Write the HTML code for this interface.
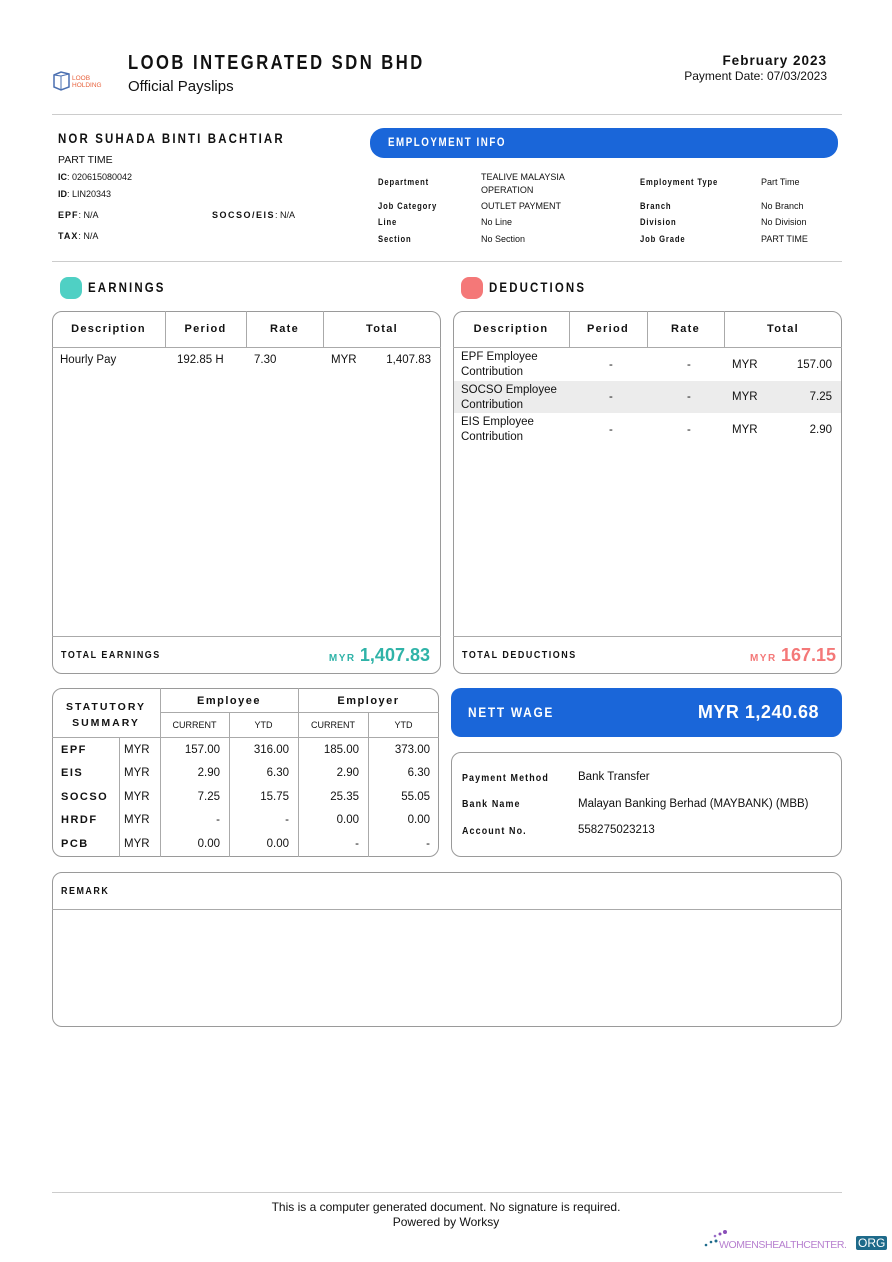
<!DOCTYPE html>
<html><head><meta charset="utf-8">
<style>
*{margin:0;padding:0;box-sizing:border-box}
body{width:892px;height:1262px;background:#fff;font-family:"Liberation Sans",Arial,sans-serif;color:#111;position:relative;overflow:hidden}
.a{position:absolute;white-space:nowrap}
.b{font-weight:bold;letter-spacing:1.2px;transform-origin:left center}
.c{display:inline-block;transform:scaleX(.85);transform-origin:left center}
.box{position:absolute;border:1px solid #9a9a9a;border-radius:10px}
.hl{position:absolute;height:1px;background:#aaa}
.vl{position:absolute;width:1px;background:#aaa}
.s9{font-size:9px}
.s11{font-size:11.5px}
.r{text-align:right}
.ctr{text-align:center}
</style></head><body>

<svg class="a" style="left:53px;top:71px" width="52" height="20" viewBox="0 0 52 20">
<path d="M1 4 L8 1 L16 3 L16 16 L8 19 L1 16 Z" fill="none" stroke="#4a6fb0" stroke-width="1.5"/>
<path d="M8 5 L16 3 M8 5 L1 4 M8 5 L8 19" fill="none" stroke="#4a6fb0" stroke-width="1"/>
<text x="19" y="9" font-size="6.5" fill="#e8623c" font-family="Liberation Sans">LOOB</text>
<text x="19" y="16" font-size="6.5" fill="#e8623c" font-family="Liberation Sans">HOLDING</text>
</svg>
<div class="a b" style="left:128px;top:52px;font-size:20px;letter-spacing:3px"><span class="c" style="transform:scaleX(.83)">LOOB INTEGRATED SDN BHD</span></div>
<div class="a" style="left:128px;top:78px;font-size:15px">Official Payslips</div>
<div class="a b r" style="right:65px;top:53px;font-size:13.5px;letter-spacing:1px">February 2023</div>
<div class="a r" style="right:65px;top:69px;font-size:12px">Payment Date: 07/03/2023</div>
<div class="hl" style="left:52px;top:114px;width:790px;background:#ccc"></div>

<div class="a b" style="left:58px;top:131px;font-size:13.5px;letter-spacing:2.5px"><span class="c">NOR SUHADA BINTI BACHTIAR</span></div>
<div class="a" style="left:58px;top:154px;font-size:10.5px">PART TIME</div>
<div class="a s9" style="left:58px;top:172px"><b>IC</b>: 020615080042</div>
<div class="a s9" style="left:58px;top:189px"><b>ID</b>: LIN20343</div>
<div class="a s9" style="left:58px;top:210px"><b style="letter-spacing:1px">EPF</b>: N/A</div>
<div class="a s9" style="left:212px;top:210px"><b style="letter-spacing:1.5px">SOCSO/EIS</b>: N/A</div>
<div class="a s9" style="left:58px;top:231px"><b style="letter-spacing:1px">TAX</b>: N/A</div>

<div class="a" style="left:370px;top:128px;width:468px;height:30px;background:#1a66d9;border-radius:14px"></div>
<div class="a b" style="left:388px;top:137px;font-size:11.5px;color:#fff;letter-spacing:1.8px"><span class="c">EMPLOYMENT INFO</span></div>

<div class="a b s9" style="left:378px;top:177px;letter-spacing:1px"><span class="c">Department</span></div>
<div class="a s9" style="left:481px;top:171px;line-height:13px">TEALIVE MALAYSIA<br>OPERATION</div>
<div class="a b s9" style="left:640px;top:177px;letter-spacing:1px"><span class="c">Employment Type</span></div>
<div class="a s9" style="left:761px;top:177px">Part Time</div>
<div class="a b s9" style="left:378px;top:201px;letter-spacing:1px"><span class="c">Job Category</span></div>
<div class="a s9" style="left:481px;top:201px">OUTLET PAYMENT</div>
<div class="a b s9" style="left:640px;top:201px;letter-spacing:1px"><span class="c">Branch</span></div>
<div class="a s9" style="left:761px;top:201px">No Branch</div>
<div class="a b s9" style="left:378px;top:217px;letter-spacing:1px"><span class="c">Line</span></div>
<div class="a s9" style="left:481px;top:217px">No Line</div>
<div class="a b s9" style="left:640px;top:217px;letter-spacing:1px"><span class="c">Division</span></div>
<div class="a s9" style="left:761px;top:217px">No Division</div>
<div class="a b s9" style="left:378px;top:234px;letter-spacing:1px"><span class="c">Section</span></div>
<div class="a s9" style="left:481px;top:234px">No Section</div>
<div class="a b s9" style="left:640px;top:234px;letter-spacing:1px"><span class="c">Job Grade</span></div>
<div class="a s9" style="left:761px;top:234px">PART TIME</div>
<div class="hl" style="left:52px;top:261px;width:790px;background:#ccc"></div>

<div class="a" style="left:60px;top:277px;width:22px;height:22px;border-radius:8px;background:#4fd0c4"></div>
<div class="a b" style="left:88px;top:280px;font-size:13.5px;letter-spacing:2.5px"><span class="c">EARNINGS</span></div>
<div class="box" style="left:52px;top:311px;width:389px;height:363px"></div>
<div class="hl" style="left:52px;top:347px;width:389px"></div>
<div class="vl" style="left:165px;top:311px;height:36px"></div>
<div class="vl" style="left:246px;top:311px;height:36px"></div>
<div class="vl" style="left:323px;top:311px;height:36px"></div>
<div class="a b ctr" style="left:52px;width:113px;top:323px;font-size:11px;letter-spacing:1.3px">Description</div>
<div class="a b ctr" style="left:165px;width:81px;top:323px;font-size:11px;letter-spacing:1.3px">Period</div>
<div class="a b ctr" style="left:246px;width:77px;top:323px;font-size:11px;letter-spacing:1.3px">Rate</div>
<div class="a b ctr" style="left:323px;width:118px;top:323px;font-size:11px;letter-spacing:1.3px">Total</div>
<div class="a s11" style="left:60px;top:354px">Hourly Pay</div>
<div class="a s11" style="left:177px;top:354px">192.85 H</div>
<div class="a s11" style="left:254px;top:354px">7.30</div>
<div class="a s11" style="left:331px;top:354px">MYR</div>
<div class="a s11 r" style="right:461px;top:354px">1,407.83</div>
<div class="hl" style="left:52px;top:636px;width:389px"></div>
<div class="a b" style="left:61px;top:649px;font-size:10.5px;letter-spacing:1.8px"><span class="c">TOTAL EARNINGS</span></div>
<div class="a b r" style="right:462px;top:645px;color:#2fb3a8;font-size:18px;letter-spacing:0"><span style="font-size:10px;letter-spacing:1.5px">MYR </span>1,407.83</div>

<div class="a" style="left:461px;top:277px;width:22px;height:22px;border-radius:8px;background:#f47878"></div>
<div class="a b" style="left:489px;top:280px;font-size:13.5px;letter-spacing:2.5px"><span class="c">DEDUCTIONS</span></div>
<div class="box" style="left:453px;top:311px;width:389px;height:363px"></div>
<div class="hl" style="left:453px;top:347px;width:389px"></div>
<div class="vl" style="left:569px;top:311px;height:36px"></div>
<div class="vl" style="left:647px;top:311px;height:36px"></div>
<div class="vl" style="left:724px;top:311px;height:36px"></div>
<div class="a b ctr" style="left:453px;width:116px;top:323px;font-size:11px;letter-spacing:1.3px">Description</div>
<div class="a b ctr" style="left:569px;width:78px;top:323px;font-size:11px;letter-spacing:1.3px">Period</div>
<div class="a b ctr" style="left:647px;width:77px;top:323px;font-size:11px;letter-spacing:1.3px">Rate</div>
<div class="a b ctr" style="left:724px;width:118px;top:323px;font-size:11px;letter-spacing:1.3px">Total</div>
<div class="a" style="left:454px;top:381px;width:387px;height:32px;background:#ececec"></div>
<div class="a s11" style="left:461px;top:350px;line-height:15px">EPF Employee<br>Contribution</div>
<div class="a s11" style="left:461px;top:383px;line-height:15px">SOCSO Employee<br>Contribution</div>
<div class="a s11" style="left:461px;top:415px;line-height:15px">EIS Employee<br>Contribution</div>
<div class="a s11" style="left:609px;top:359px">-</div><div class="a s11" style="left:687px;top:359px">-</div><div class="a s11" style="left:732px;top:359px">MYR</div><div class="a s11 r" style="right:60px;top:359px">157.00</div>
<div class="a s11" style="left:609px;top:391px">-</div><div class="a s11" style="left:687px;top:391px">-</div><div class="a s11" style="left:732px;top:391px">MYR</div><div class="a s11 r" style="right:60px;top:391px">7.25</div>
<div class="a s11" style="left:609px;top:424px">-</div><div class="a s11" style="left:687px;top:424px">-</div><div class="a s11" style="left:732px;top:424px">MYR</div><div class="a s11 r" style="right:60px;top:424px">2.90</div>
<div class="hl" style="left:453px;top:636px;width:389px"></div>
<div class="a b" style="left:462px;top:649px;font-size:10.5px;letter-spacing:1.8px"><span class="c">TOTAL DEDUCTIONS</span></div>
<div class="a b r" style="right:56px;top:645px;color:#f47878;font-size:18px;letter-spacing:0"><span style="font-size:10px;letter-spacing:1.5px">MYR </span>167.15</div>

<div class="box" style="left:52px;top:688px;width:387px;height:169px"></div>
<div class="hl" style="left:160px;top:712px;width:279px"></div>
<div class="hl" style="left:52px;top:737px;width:387px"></div>
<div class="vl" style="left:160px;top:688px;height:169px"></div>
<div class="vl" style="left:298px;top:688px;height:169px"></div>
<div class="vl" style="left:119px;top:737px;height:120px"></div>
<div class="vl" style="left:229px;top:712px;height:145px"></div>
<div class="vl" style="left:368px;top:712px;height:145px"></div>
<div class="a b ctr" style="left:52px;width:108px;top:699px;font-size:10.5px;letter-spacing:2px;line-height:16px">STATUTORY<br>SUMMARY</div>
<div class="a b ctr" style="left:160px;width:138px;top:695px;font-size:11px;letter-spacing:1.5px">Employee</div>
<div class="a b ctr" style="left:298px;width:141px;top:695px;font-size:11px;letter-spacing:1.5px">Employer</div>
<div class="a ctr" style="left:160px;width:69px;top:720px;font-size:9px">CURRENT</div>
<div class="a ctr" style="left:229px;width:69px;top:720px;font-size:9px">YTD</div>
<div class="a ctr" style="left:298px;width:70px;top:720px;font-size:9px">CURRENT</div>
<div class="a ctr" style="left:368px;width:71px;top:720px;font-size:9px">YTD</div>

<div class="a b" style="left:61px;top:744px;font-size:11px;letter-spacing:1.5px">EPF</div><div class="a s11" style="left:124px;top:744px">MYR</div>
<div class="a s11 r" style="right:672px;top:744px">157.00</div><div class="a s11 r" style="right:603px;top:744px">316.00</div><div class="a s11 r" style="right:533px;top:744px">185.00</div><div class="a s11 r" style="right:462px;top:744px">373.00</div>
<div class="a b" style="left:61px;top:767px;font-size:11px;letter-spacing:1.5px">EIS</div><div class="a s11" style="left:124px;top:767px">MYR</div>
<div class="a s11 r" style="right:672px;top:767px">2.90</div><div class="a s11 r" style="right:603px;top:767px">6.30</div><div class="a s11 r" style="right:533px;top:767px">2.90</div><div class="a s11 r" style="right:462px;top:767px">6.30</div>
<div class="a b" style="left:61px;top:791px;font-size:11px;letter-spacing:1.5px">SOCSO</div><div class="a s11" style="left:124px;top:791px">MYR</div>
<div class="a s11 r" style="right:672px;top:791px">7.25</div><div class="a s11 r" style="right:603px;top:791px">15.75</div><div class="a s11 r" style="right:533px;top:791px">25.35</div><div class="a s11 r" style="right:462px;top:791px">55.05</div>
<div class="a b" style="left:61px;top:814px;font-size:11px;letter-spacing:1.5px">HRDF</div><div class="a s11" style="left:124px;top:814px">MYR</div>
<div class="a s11 r" style="right:672px;top:814px">-</div><div class="a s11 r" style="right:603px;top:814px">-</div><div class="a s11 r" style="right:533px;top:814px">0.00</div><div class="a s11 r" style="right:462px;top:814px">0.00</div>
<div class="a b" style="left:61px;top:838px;font-size:11px;letter-spacing:1.5px">PCB</div><div class="a s11" style="left:124px;top:838px">MYR</div>
<div class="a s11 r" style="right:672px;top:838px">0.00</div><div class="a s11 r" style="right:603px;top:838px">0.00</div><div class="a s11 r" style="right:533px;top:838px">-</div><div class="a s11 r" style="right:462px;top:838px">-</div>

<div class="a" style="left:451px;top:688px;width:391px;height:49px;background:#1a66d9;border-radius:10px"></div>
<div class="a b" style="left:468px;top:704px;color:#fff;font-size:14px;letter-spacing:2px"><span class="c">NETT WAGE</span></div>
<div class="a b r" style="right:73px;top:702px;color:#fff;font-size:18px;letter-spacing:.5px">MYR 1,240.68</div>

<div class="box" style="left:451px;top:752px;width:391px;height:105px"></div>
<div class="a b" style="left:462px;top:772px;font-size:10.5px;letter-spacing:1.3px"><span class="c">Payment Method</span></div>
<div class="a s11" style="left:578px;top:771px">Bank Transfer</div>
<div class="a b" style="left:462px;top:798px;font-size:10.5px;letter-spacing:1.3px"><span class="c">Bank Name</span></div>
<div class="a s11" style="left:578px;top:798px">Malayan Banking Berhad (MAYBANK) (MBB)</div>
<div class="a b" style="left:462px;top:825px;font-size:10.5px;letter-spacing:1.3px"><span class="c">Account No.</span></div>
<div class="a s11" style="left:578px;top:824px">558275023213</div>

<div class="box" style="left:52px;top:872px;width:790px;height:155px"></div>
<div class="hl" style="left:52px;top:909px;width:790px"></div>
<div class="a b" style="left:61px;top:885px;font-size:10.5px;letter-spacing:1.8px"><span class="c">REMARK</span></div>

<div class="hl" style="left:52px;top:1192px;width:790px;background:#ccc"></div>
<div class="a ctr" style="left:0;width:892px;top:1200px;font-size:12px">This is a computer generated document. No signature is required.</div>
<div class="a ctr" style="left:0;width:892px;top:1215px;font-size:12px">Powered by Worksy</div>

<svg class="a" style="left:704px;top:1230px" width="24" height="20">
<circle cx="21" cy="2" r="2" fill="#8a4fb8"/><circle cx="16" cy="4" r="1.5" fill="#8a4fb8"/><circle cx="11" cy="6" r="1.3" fill="#9b6fc8"/>
<circle cx="12" cy="11" r="1.5" fill="#1f6c8c"/><circle cx="7" cy="12" r="1.3" fill="#1f6c8c"/><circle cx="2" cy="15" r="1.3" fill="#1f6c8c"/>
</svg>
<div class="a" style="left:719px;top:1239px;font-size:10.5px;color:#b77fcf;letter-spacing:-0.4px">WOMENSHEALTHCENTER.</div>
<div class="a" style="left:856px;top:1236px;background:#1e6a8a;color:#fff;font-size:12px;padding:0 2px;border-radius:2px">ORG</div>
</body></html>
